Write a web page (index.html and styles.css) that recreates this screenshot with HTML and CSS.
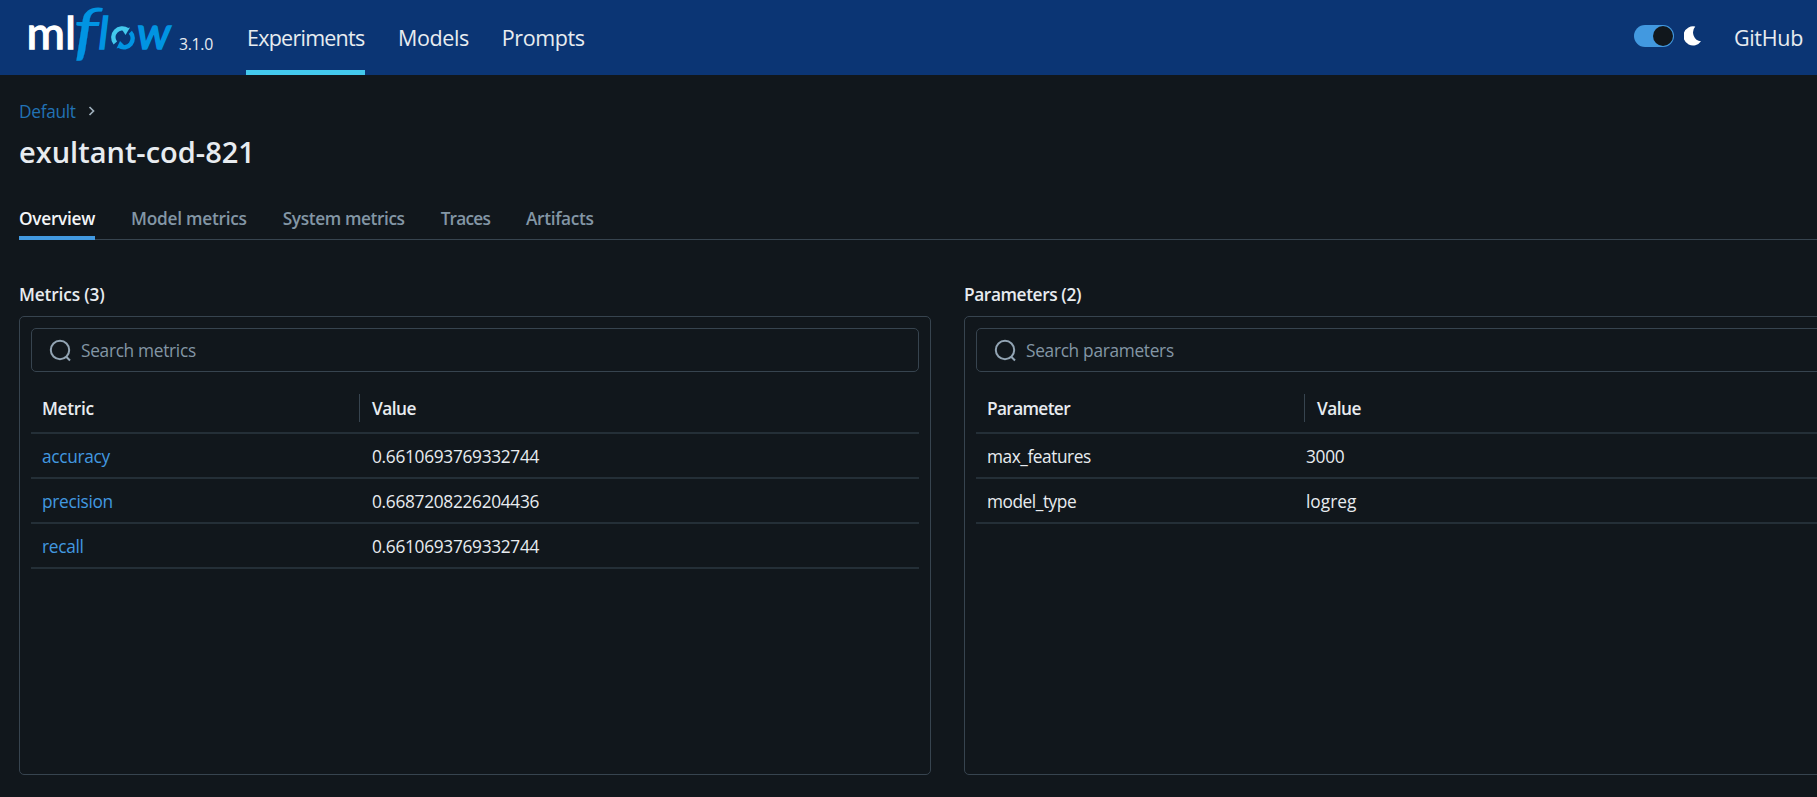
FILE: index.html
```html
<!DOCTYPE html>
<html lang="en">
<head>
<meta charset="utf-8">
<title>MLflow</title>
<link rel="stylesheet" href="styles.css">
</head>
<body>
<header class="topbar">
  <svg class="logo" width="150" height="75" viewBox="0 0 150 75" aria-label="mlflow">
    <text class="logo-ml" x="-1.500" y="49" textLength="49.500" lengthAdjust="spacingAndGlyphs">ml</text>
    <text class="logo-f" transform="translate(45 53) scale(1.28 1)">f</text>
    <text class="logo-l" transform="translate(70.500 49)">l</text>
    <text class="logo-w" transform="translate(109 49) scale(1.06 1)">w</text>
    <path d="M87.300 43A9 9 0 0 1 99.500 30" fill="none" stroke="#43c9ed" stroke-width="4.400"/>
    <path d="M102.300 32.200A9 9 0 0 1 91 46" fill="none" stroke="#0194e2" stroke-width="4.400"/>
    <path d="M94 29.500L102 27.500L97.500 35Z" fill="#43c9ed"/>
    <path d="M88.500 48.500L92 41L97 46Z" fill="#0194e2"/>
  </svg>
  <span class="version">3.1.0</span>
  <nav class="nav">
    <a class="nav-link active">Experiments</a>
    <a class="nav-link">Models</a>
    <a class="nav-link">Prompts</a>
  </nav>
  <div class="tools">
    <span class="switch"><span class="knob"></span></span>
    <svg class="moon" width="18" height="20" viewBox="0 0 18 20"><path d="M11.300 .6A9.600 9.600 0 1 0 17 15.300A8.900 8.900 0 0 1 11.300 .6Z" fill="#fff"/></svg>
    <a class="github">GitHub</a>
  </div>
</header>
<main class="page">
  <div class="crumbs"><a>Default</a><svg width="8" height="10" viewBox="0 0 8 10"><path d="M1.500 1L5.500 5L1.500 9" fill="none" stroke="#a0b0bc" stroke-width="1.700"/></svg></div>
  <h1 class="title">exultant-cod-821</h1>
  <div class="tabs">
    <a class="tab active">Overview</a>
    <a class="tab model">Model metrics</a>
    <a class="tab system">System metrics</a>
    <a class="tab traces">Traces</a>
    <a class="tab">Artifacts</a>
  </div>
  <div class="columns">
    <section class="col">
      <h2 class="heading">Metrics (3)</h2>
      <div class="panel">
        <div class="search"><svg width="23" height="23" viewBox="0 0 23 23"><path d="M16.500 17L21 21.500M20.200 11A9.200 9.200 0 1 1 1.800 11A9.200 9.200 0 1 1 20.200 11Z" fill="none" stroke="#92a4b3" stroke-width="2"/></svg><span>Search metrics</span></div>
        <div class="row head"><span class="key">Metric</span><span class="val">Value</span></div>
        <div class="row"><a class="key">accuracy</a><span class="val">0.6610693769332744</span></div>
        <div class="row"><a class="key">precision</a><span class="val">0.6687208226204436</span></div>
        <div class="row"><a class="key">recall</a><span class="val">0.6610693769332744</span></div>
      </div>
    </section>
    <section class="col params">
      <h2 class="heading">Parameters (2)</h2>
      <div class="panel">
        <div class="search"><svg width="23" height="23" viewBox="0 0 23 23"><path d="M16.500 17L21 21.500M20.200 11A9.200 9.200 0 1 1 1.800 11A9.200 9.200 0 1 1 20.200 11Z" fill="none" stroke="#92a4b3" stroke-width="2"/></svg><span>Search parameters</span></div>
        <div class="row head"><span class="key">Parameter</span><span class="val">Value</span></div>
        <div class="row"><span class="key">max_features</span><span class="val">3000</span></div>
        <div class="row"><span class="key">model_type</span><span class="val name">logreg</span></div>
      </div>
    </section>
  </div>
</main>
</body>
</html>
```
FILE: styles.css
```css
* { box-sizing: border-box; }
body {
  margin: 0;
  height: 797px;
  overflow: hidden;
  background: #11171c;
  color: #e8ecf0;
  font-family: "Open Sans", "Noto Sans", sans-serif;
  font-size: 17.3px;
  letter-spacing: -0.3px;
}
.topbar {
  display: flex;
  height: 75px;
  background: #0b3574;
  padding: 0 14px 0 28px;
}
.logo { display: block; flex: none; overflow: visible; }
.logo text { font-family: Lato, sans-serif; letter-spacing: 0; }
.logo-ml { font-size: 44px; font-weight: 400; fill: #fff; stroke: #fff; stroke-width: 1.3px; }
.logo-f, .logo-l, .logo-w { font-size: 44px; font-style: italic; font-weight: 400; fill: #0194e2; stroke: #0194e2; stroke-width: 1.5px; }
.logo .logo-f { font-size: 63px; stroke-width: .2px; }
.version { width: 68px; padding: 33px 0 0 1px; font-size: 15.800px; line-height: 22px; }
.nav { display: flex; gap: 32px; }
.nav-link { height: 75px; padding: 22px 0 0 1px; font-size: 21.500px; line-height: 32px; letter-spacing: -0.4px; }
.nav-link.active { border-bottom: 5px solid #43c9ed; width: 119px; letter-spacing: -0.75px; white-space: nowrap; }
.tools { display: flex; margin-left: auto; }
.switch { width: 40px; height: 22px; margin-top: 25px; border-radius: 11px; background: #4299e0; display: flex; justify-content: flex-end; padding: 1px; }
.knob { width: 20px; height: 20px; border-radius: 50%; background: #11171c; }
.moon { margin: 26px 0 0 10px; }
.github { margin-left: 32px; padding-top: 22px; font-size: 21.500px; line-height: 32px; }
.page { padding-left: 19px; }
.crumbs { display: flex; align-items: center; gap: 12px; height: 24px; margin-top: 24px; color: #2272b4; }
.title { margin: 9px 0 0; font-size: 29px; font-weight: 600; line-height: 40px; letter-spacing: 0; }
.tabs { display: flex; gap: 36px; height: 48px; margin-top: 20px; border-bottom: 1px solid #37444f; }
.tab { height: 48px; padding-top: 14px; line-height: 26px; font-weight: 600; color: #8396a5; letter-spacing: -0.35px; }
.tab.active { color: #f4f6f8; border-bottom: 4px solid #4299e0; letter-spacing: -0.3px; }
.tab.model { letter-spacing: -0.25px; }
.tab.system { letter-spacing: -0.4px; }
.tab.traces { letter-spacing: -0.8px; }
.columns { display: flex; gap: 33px; margin-top: 42px; }
.col { width: 912px; flex: none; }
.heading { margin: 0; font-size: 17.300px; line-height: 26px; font-weight: 600; letter-spacing: -0.15px; }
.params .heading { letter-spacing: -0.4px; }
.panel { height: 459px; margin-top: 8px; border: 1px solid #37444f; border-radius: 5px; padding: 11px; }
.search { display: flex; align-items: center; gap: 9px; height: 44px; padding-left: 17px; border: 1px solid #37444f; border-radius: 5px; color: #8396a5; }
.row { display: flex; height: 45px; align-items: center; border-bottom: 2px solid #242f37; padding: 2px 0 0 11px; }
.row.head { height: 62px; padding-top: 11px; font-weight: 600; }
.key { width: 330px; }
a.key { color: #4299e0; }
.head .key { width: 317px; padding-top: 2px; }
.head .val { height: 28px; line-height: 30px; border-left: 1px solid #37444f; padding-left: 12px; letter-spacing: -0.5px; }
.params .key { width: 319px; letter-spacing: -0.45px; }
.params .head .key { width: 317px; letter-spacing: -0.65px; }
.val.name { letter-spacing: 0; }
```
